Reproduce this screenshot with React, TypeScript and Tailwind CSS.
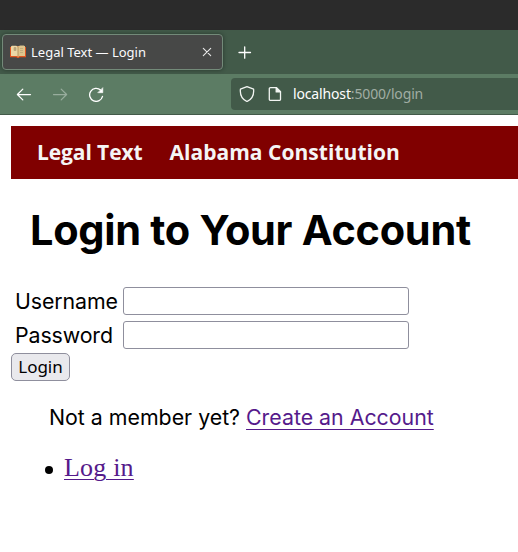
function BookIcon() {
  return (
    <svg className="h-4 w-4 shrink-0" viewBox="0 0 16 16">
      <path d="M0 3h1v-.7h14V3h1v10.2H9.5l-.7.8H7.2l-.7-.8H0z" fill="#e2561f" />
      <path d="M1 2.4 2 1.8h4.2L8 2.8l1.8-1H14l1 .6V12H9.4L8 12.6 6.6 12H1z" fill="#ecd7a6" />
      <path d="M8 2.8 9.8 1.8H14l1 .6V12H9.4L8 12.6z" fill="#dfc58c" />
      <path d="M8 2.8v9.6" stroke="#a98552" strokeWidth=".8" />
      <path d="M4 3.5h2v3H4zM10 4.5h3M10 6.5h3M10 8.5h3" stroke="#b8a47a" strokeWidth=".7" fill="#b8a47a" />
    </svg>
  );
}

function TabStrip() {
  return (
    <div className="flex h-11 items-center bg-[#425a49] pl-0.5">
      <div className="flex h-9 w-[221px] items-center rounded-[4px] border border-[#738a79] bg-[#474847] pr-[9px] pl-[7px] shadow-[0_0_4px_rgba(0,0,0,0.4)]">
        <BookIcon />
        <span className="ml-[5px] flex-1 text-[13px] leading-none whitespace-nowrap text-[#fbfbfe]">Legal Text — Login</span>
        <svg className="h-3 w-3" viewBox="0 0 12 12" fill="none" stroke="#e8e8e8" strokeWidth="1.1" strokeLinecap="round">
          <path d="m2.3 2.3 7.4 7.4M9.7 2.3 2.3 9.7" />
        </svg>
      </div>
      <svg className="ml-[15px] h-[14px] w-[14px]" viewBox="0 0 14 14" fill="none" stroke="#fff" strokeWidth="1.3" strokeLinecap="round">
        <path d="M1 7.5h11.5M6.7 1.8v11.4" />
      </svg>
    </div>
  );
}

function Toolbar() {
  return (
    <div className="flex h-[41px] items-center border-b border-[#425a49] bg-[#5c7c64] pl-4">
      <svg className="h-4 w-4" viewBox="0 0 16 16" fill="none" stroke="#fff" strokeWidth="1.25" strokeLinecap="round" strokeLinejoin="round">
        <path d="M14.5 8.5H1.5M6.8 3.1 1.4 8.5l5.4 5.4" />
      </svg>
      <svg className="ml-5 h-4 w-4" viewBox="0 0 16 16" fill="none" stroke="#98ad9d" strokeWidth="1.25" strokeLinecap="round" strokeLinejoin="round">
        <path d="M1.5 8.5h13M9.2 3.1l5.4 5.4-5.4 5.4" />
      </svg>
      <svg className="ml-5 h-4 w-4" viewBox="0 0 16 16" fill="none" stroke="#fff" strokeWidth="1.3" strokeLinecap="round" strokeLinejoin="round">
        <path d="M14.5 10.3A6.5 6.5 0 1 1 12.6 4.1" />
        <path d="M14.8 2v4.7h-4.7z" fill="#fff" strokeWidth=".6" />
      </svg>
      <div className="ml-[127px] flex h-8 flex-1 items-center rounded-l-[4px] bg-[#425a49] pl-2">
        <svg className="h-4 w-4" viewBox="0 0 16 16" fill="none" stroke="#f2f5f2" strokeWidth="1.3" strokeLinejoin="round">
          <path d="M8 .7 14.6 3.2c.5 5.4-1.6 10-6.6 12.3C3 13.2.9 8.6 1.4 3.2z" />
        </svg>
        <svg className="ml-3 h-4 w-4" viewBox="0 0 16 16" fill="none" stroke="#f2f5f2" strokeWidth="1.3" strokeLinejoin="round">
          <path d="M3.5 1.6h6l4 4v7.6a1.2 1.2 0 0 1-1.2 1.2H3.5a1.2 1.2 0 0 1-1.2-1.2V2.8a1.2 1.2 0 0 1 1.2-1.2z" />
          <path d="M9.2 1.6v4.3h4.3z" fill="#f2f5f2" />
        </svg>
        <span className="ml-2.5 text-[14px] leading-none tracking-[-0.15px] whitespace-nowrap text-white">
          localhost<span className="text-[#a0ada3]">:5000/login</span>
        </span>
      </div>
    </div>
  );
}

function Field({ id, label, type }: { id: string; label: string; type: string }) {
  return (
    <div className="flex h-7 items-center">
      <label htmlFor={id} className="w-[108px] text-[21.33px] leading-7 tracking-[-0.1px]">{label}</label>
      <input id={id} type={type} className="h-7 w-[286px] rounded-[3px] border border-[#8f8f9d] bg-white px-1" />
    </div>
  );
}

export default function App() {
  return (
    <div className="h-[552px] w-[518px] overflow-hidden bg-white font-['Noto_Sans',sans-serif] text-black">
      <div className="h-[30px] bg-[#2b2b2b]" />
      <TabStrip />
      <Toolbar />
      <main className="pt-[11px] pl-[11px] font-['Inter',sans-serif]">
        <nav className="flex h-[53px] items-center gap-[27px] bg-[#800000] pl-[26px] font-['Open_Sans',sans-serif] text-[21px] font-bold whitespace-nowrap text-[#f5f5f5]">
          <span className="tracking-[-0.1px]">Legal Text</span>
          <span className="tracking-[0.03px]">Alabama Constitution</span>
        </nav>
        <h1 className="mt-[26px] ml-[19px] text-[41.5px] leading-[50px] font-bold tracking-[-0.3px] whitespace-nowrap">Login to Your Account</h1>
        <form className="mt-8">
          <div className="flex flex-col gap-1.5 pl-1">
            <Field id="username" label="Username" type="text" />
            <Field id="password" label="Password" type="password" />
          </div>
          <button type="button" className="mt-1 block h-7 w-[59px] rounded-[5px] border border-[#8f8f9d] bg-[#e9e9ed] text-center font-['Noto_Sans',sans-serif] text-[17px] leading-[26px]">Login</button>
        </form>
        <p className="mt-[22px] ml-[38px] text-[21.33px] leading-7 whitespace-nowrap">
          Not a member yet?{" "}
          <a className="text-[#551a8b] underline decoration-1 underline-offset-[4px]">Create an Account</a>
        </p>
        <ul className="mt-[22px] ml-[34px] font-['Liberation_Serif',serif] text-[26px] leading-[30px]">
          <li className="flex items-center gap-[11px]">
            <span className="mt-1 h-2 w-2 rounded-full bg-black" />
            <a className="tracking-[0.2px] text-[#551a8b] underline decoration-1 underline-offset-[3px]">Log in</a>
          </li>
        </ul>
      </main>
    </div>
  );
}
